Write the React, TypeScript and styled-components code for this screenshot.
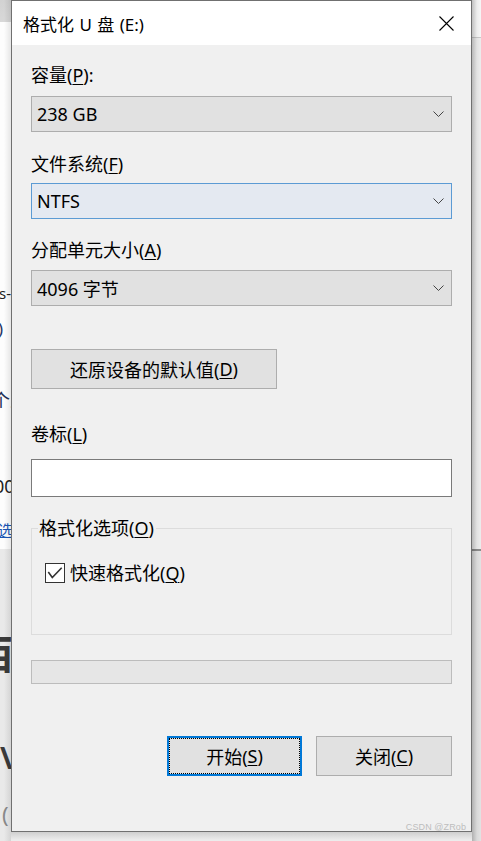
import React from "react";
import styled, { createGlobalStyle } from "styled-components";

const GlobalStyle = createGlobalStyle`
  html, body { margin: 0; padding: 0; }
  body {
    width: 481px;
    height: 841px;
    overflow: hidden;
    font-family: "Noto Sans", "Noto Sans CJK SC", sans-serif;
    color: #000;
  }
`;

const Screen = styled.div`
  display: grid;
  grid-template-columns: 11px 461px 9px;
  grid-template-rows: 832px 9px;
  width: 481px;
  height: 841px;
  background: #ececec;
  overflow: hidden;
`;

const LeftBackdrop = styled.div`
  grid-column: 1;
  grid-row: 1 / span 2;
  position: relative;
  overflow: hidden;
  background: linear-gradient(
    to bottom,
    #d2d2d2 0,
    #d8d8d8 22px,
    #fdfdfd 22px,
    #fdfdfd 549px,
    #e9e9e9 549px
  );
  &::after {
    content: "";
    position: absolute;
    top: 0;
    bottom: 0;
    right: 0;
    width: 7px;
    background: linear-gradient(to right, rgba(0, 0, 0, 0), rgba(0, 0, 0, 0.09));
  }
`;

const Fragment = styled.span<{ $x: number; $y: number; $size: number; $color: string; $bold?: boolean; $underline?: boolean }>`
  position: absolute;
  left: ${(p) => p.$x}px;
  top: ${(p) => p.$y}px;
  font-size: ${(p) => p.$size}px;
  line-height: 1;
  color: ${(p) => p.$color};
  font-weight: ${(p) => (p.$bold ? 700 : 400)};
  text-decoration: ${(p) => (p.$underline ? "underline" : "none")};
  white-space: nowrap;
`;

const RightBackdrop = styled.div`
  grid-column: 3;
  grid-row: 1 / span 2;
  background:
    linear-gradient(to right, rgba(0, 0, 0, 0.22), rgba(0, 0, 0, 0.04) 5px, rgba(0, 0, 0, 0) 9px),
    linear-gradient(
      to bottom,
      #f6f6f6 0,
      #f6f6f6 37px,
      #c9c9c9 37px,
      #c9c9c9 38px,
      #ececec 38px,
      #ececec 549px,
      #8c8c8c 549px,
      #8c8c8c 551px,
      #e2e2e2 551px
    );
`;

const BottomShadow = styled.div`
  grid-column: 2;
  grid-row: 2;
  background: linear-gradient(to bottom, #cfcfcf, #ececec 8px);
`;

const Dialog = styled.div`
  grid-column: 2;
  grid-row: 1;
  position: relative;
  display: flex;
  flex-direction: column;
  box-sizing: border-box;
  border: 1px solid #707070;
  background: #f0f0f0;
`;

const TitleBar = styled.div`
  display: flex;
  align-items: center;
  justify-content: space-between;
  height: 44px;
  padding-left: 11px;
  background: #fff;
  font-size: 17px;
  word-spacing: 1px;
`;

const CloseButton = styled.div`
  display: flex;
  align-items: center;
  justify-content: center;
  width: 49px;
  height: 44px;
`;

const Body = styled.div`
  display: flex;
  flex-direction: column;
  padding: 18px 19px 0;
`;

const Label = styled.div<{ $mt?: number; $mb: number }>`
  height: 24px;
  line-height: 24px;
  font-size: 18px;
  margin-top: ${(p) => p.$mt ?? 0}px;
  margin-bottom: ${(p) => p.$mb}px;
  white-space: nowrap;
`;

const Key = styled.u`
  text-decoration: underline;
  text-underline-offset: 2px;
  text-decoration-thickness: 1px;
`;

const Combo = styled.div<{ $active?: boolean }>`
  display: flex;
  align-items: center;
  justify-content: space-between;
  height: 36px;
  box-sizing: border-box;
  padding: 0 7px 0 5px;
  border: 1px solid ${(p) => (p.$active ? "#5c9bd4" : "#adadad")};
  background: ${(p) => (p.$active ? "#e4e9f1" : "#e1e1e1")};
  font-size: 18px;
`;

const PushButton = styled.div<{ $w: number; $mt?: number; $focused?: boolean }>`
  position: relative;
  display: flex;
  align-items: center;
  justify-content: center;
  width: ${(p) => p.$w}px;
  height: 40px;
  margin-top: ${(p) => p.$mt ?? 0}px;
  box-sizing: border-box;
  border: ${(p) => (p.$focused ? "2px solid #0078d7" : "1px solid #adadad")};
  background: #e1e1e1;
  font-size: 18px;
  white-space: nowrap;
  ${(p) =>
    p.$focused
      ? `&::after {
    content: "";
    position: absolute;
    inset: 0;
    border: 1px dotted #000;
  }`
      : ""}
`;

const TextInput = styled.div`
  height: 38px;
  box-sizing: border-box;
  border: 1px solid #7a7a7a;
  background: #fff;
`;

const GroupBox = styled.div`
  position: relative;
  margin-top: 31px;
  height: 107px;
  box-sizing: border-box;
  border: 1px solid #dcdcdc;
  padding: 32px 13px 0;
`;

const Legend = styled.div`
  position: absolute;
  top: -13px;
  left: 6px;
  padding: 0 2px 0 1px;
  height: 24px;
  line-height: 24px;
  font-size: 18px;
  background: #f0f0f0;
  white-space: nowrap;
`;

const CheckRow = styled.div`
  display: flex;
  align-items: center;
  gap: 5px;
  font-size: 18px;
  line-height: 24px;
`;

const CheckBox = styled.div`
  display: flex;
  width: 20px;
  height: 20px;
  box-sizing: border-box;
  border: 1px solid #333;
  background: #fff;
`;

const Progress = styled.div`
  margin-top: 25px;
  height: 24px;
  box-sizing: border-box;
  border: 1px solid #bcbcbc;
  background: #e6e6e6;
`;

const ButtonRow = styled.div`
  display: flex;
  justify-content: flex-end;
  gap: 14px;
  margin-top: 52px;
`;

const Watermark = styled.div`
  position: absolute;
  right: 5px;
  bottom: -1px;
  font-family: "Liberation Sans", Arial, sans-serif;
  font-size: 9px;
  line-height: 10px;
  color: #bdbdbd;
  letter-spacing: 0.1px;
`;

const Chevron = () => (
  <svg width="11" height="6" viewBox="0 0 11 6" style={{ display: "block" }}>
    <polyline points="0.5,0.5 5.5,5.5 10.5,0.5" fill="none" stroke="#444" strokeWidth="1" />
  </svg>
);

const CloseIcon = () => (
  <svg width="15" height="15" viewBox="0 0 15 15" style={{ display: "block" }}>
    <path d="M0.5 0.5 L14.5 14.5 M14.5 0.5 L0.5 14.5" stroke="#000" strokeWidth="1.1" fill="none" />
  </svg>
);

const CheckMark = () => (
  <svg width="18" height="18" viewBox="0 0 18 18" style={{ display: "block" }}>
    <polyline points="2.3,8 6.3,13.5 15.7,3.8" fill="none" stroke="#333" strokeWidth="1.6" />
  </svg>
);

export default function App() {
  return (
    <>
      <GlobalStyle />
      <Screen>
        <LeftBackdrop>
          <Fragment $x={-1} $y={286} $size={15} $color="#222">s-</Fragment>
          <Fragment $x={-2} $y={320} $size={17} $color="#1d3566">)</Fragment>
          <Fragment $x={-8} $y={391} $size={18} $color="#1d2f55">个人</Fragment>
          <Fragment $x={-6} $y={477} $size={18} $color="#222">00</Fragment>
          <Fragment $x={-2} $y={523} $size={15} $color="#1a56b4" $underline>选中</Fragment>
          <Fragment $x={-27} $y={634} $size={40} $color="#3a3a3a" $bold>西</Fragment>
          <Fragment $x={0} $y={743} $size={30} $color="#3a3a3a" $bold>\</Fragment>
          <Fragment $x={2} $y={803} $size={22} $color="#8a8a8a">(</Fragment>
        </LeftBackdrop>

        <Dialog>
          <TitleBar>
            <span>格式化 U 盘 (E:)</span>
            <CloseButton>
              <CloseIcon />
            </CloseButton>
          </TitleBar>

          <Body>
            <Label $mb={9}>
              容量(<Key>P</Key>):
            </Label>
            <Combo>
              <span>238 GB</span>
              <Chevron />
            </Combo>

            <Label $mt={20} $mb={7}>
              文件系统(<Key>F</Key>)
            </Label>
            <Combo $active>
              <span>NTFS</span>
              <Chevron />
            </Combo>

            <Label $mt={19} $mb={8}>
              分配单元大小(<Key>A</Key>)
            </Label>
            <Combo>
              <span>4096 字节</span>
              <Chevron />
            </Combo>

            <PushButton $w={246} $mt={43}>
              还原设备的默认值(<Key>D</Key>)
            </PushButton>

            <Label $mt={33} $mb={13}>
              卷标(<Key>L</Key>)
            </Label>
            <TextInput />

            <GroupBox>
              <Legend>
                格式化选项(<Key>O</Key>)
              </Legend>
              <CheckRow>
                <CheckBox>
                  <CheckMark />
                </CheckBox>
                <span>
                  快速格式化(<Key>Q</Key>)
                </span>
              </CheckRow>
            </GroupBox>

            <Progress />

            <ButtonRow>
              <PushButton $w={135} $focused>
                开始(<Key>S</Key>)
              </PushButton>
              <PushButton $w={136}>
                关闭(<Key>C</Key>)
              </PushButton>
            </ButtonRow>
          </Body>

          <Watermark>CSDN @ZRob</Watermark>
        </Dialog>

        <RightBackdrop />
        <BottomShadow />
      </Screen>
    </>
  );
}
